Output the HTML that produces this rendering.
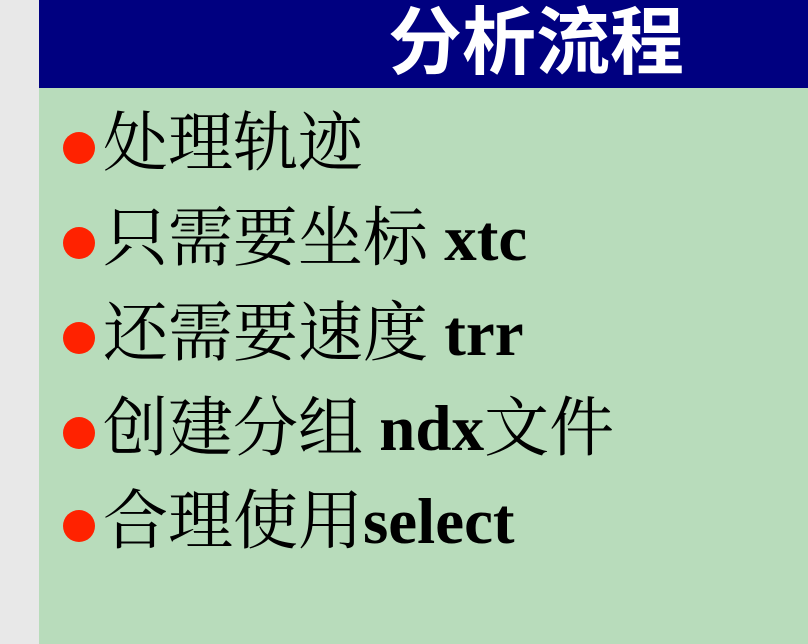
<!DOCTYPE html>
<html><head><meta charset="utf-8"><style>
html,body{margin:0;padding:0;width:808px;height:644px;overflow:hidden;background:#e8e8e8;}
#s{position:absolute;left:39px;top:0;width:769px;height:644px;background:#b8dcbb;}
#h{position:absolute;left:0;top:0;width:769px;height:88px;background:#000080;}
#t{position:absolute;left:349px;top:-8px;font:bold 74px/90px "Noto Sans CJK SC",sans-serif;color:#fff;white-space:nowrap;letter-spacing:0;}
.l{position:absolute;left:64px;font:65px/80px "Liberation Serif","Noto Serif CJK SC",serif;color:#000;white-space:nowrap;}
.l b{font-family:"Liberation Serif",serif;font-weight:bold;}
.d{position:absolute;left:24px;width:32px;height:32px;border-radius:50%;background:#ff2200;}
</style></head><body>
<div id="s"><div id="h"><div id="t">分析流程</div></div>
<div class="d" style="top:132px"></div><div class="l" style="top:104px">处理轨迹</div>
<div class="d" style="top:227px"></div><div class="l" style="top:199px">只需要坐标 <b>xtc</b></div>
<div class="d" style="top:322px"></div><div class="l" style="top:294px">还需要速度 <b>trr</b></div>
<div class="d" style="top:417px"></div><div class="l" style="top:389px">创建分组 <b>ndx</b>文件</div>
<div class="d" style="top:510px"></div><div class="l" style="top:482px">合理使用<b>select</b></div>
</div>
</body></html>
